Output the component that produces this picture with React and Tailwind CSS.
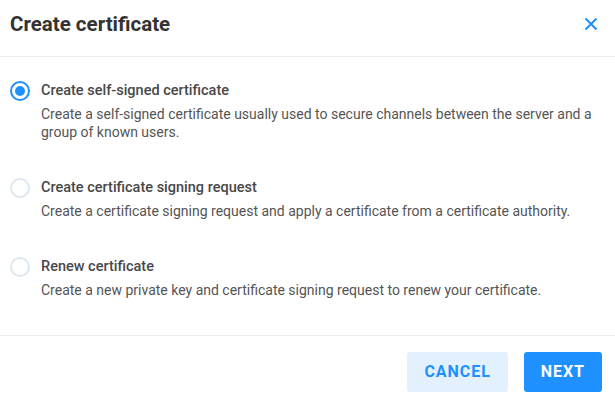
import React, { useState } from 'react';

const options = [
  {
    id: 'self',
    title: 'Create self-signed certificate',
    desc: 'Create a self-signed certificate usually used to secure channels between the server and a group of known users.',
  },
  {
    id: 'csr',
    title: 'Create certificate signing request',
    desc: 'Create a certificate signing request and apply a certificate from a certificate authority.',
  },
  {
    id: 'renew',
    title: 'Renew certificate',
    desc: 'Create a new private key and certificate signing request to renew your certificate.',
  },
];

export default function App() {
  const [selected, setSelected] = useState('self');

  return (
    <div className="w-[615px] h-[401px] bg-white overflow-hidden font-['Roboto',_'Liberation_Sans',_sans-serif]">
      {/* Header */}
      <div className="flex items-center justify-between h-[57px] pl-[10px] pr-[17px] pb-[8px] border-b border-[#e8eef4]">
        <h1 className="text-[20.5px] leading-[28px] font-bold text-[#333]">Create certificate</h1>
        <button className="text-[#1e90ff]">
          <svg width="14" height="14" viewBox="0 0 14 14" fill="none" stroke="currentColor" strokeWidth="2">
            <path d="M1.5 1.5l11 11M12.5 1.5l-11 11" />
          </svg>
        </button>
      </div>

      {/* Options */}
      <div className="pl-[10px] pr-[16px] pt-[24px] h-[279px] flex flex-col gap-[37px] border-b border-[#ececec]">
        {options.map(o => (
          <label key={o.id} className="flex gap-[11px] cursor-pointer" onClick={() => setSelected(o.id)}>
            <span
              className={
                selected === o.id
                  ? 'w-5 h-5 shrink-0 rounded-full border-2 border-[#1e90ff] flex items-center justify-center'
                  : 'w-5 h-5 shrink-0 rounded-full border-2 border-[#dde7f0]'
              }
            >
              {selected === o.id && <span className="w-[10px] h-[10px] rounded-full bg-[#1e90ff]" />}
            </span>
            <div>
              <p className="text-[14.5px] leading-[20px] font-medium text-[#484848]">{o.title}</p>
              <p className="mt-[4px] text-[14px] leading-[18px] text-[#555]">{o.desc}</p>
            </div>
          </label>
        ))}
      </div>

      {/* Footer */}
      <div className="flex justify-end gap-4 pt-4 pr-[13px]">
        <button className="h-10 px-[17px] rounded-[3px] bg-[#e3f0fd] text-[#1e90ff] text-[16px] font-bold tracking-[0.06em]">
          CANCEL
        </button>
        <button className="h-10 px-[17px] rounded-[3px] bg-[#1e90ff] text-white text-[16px] font-bold tracking-[0.06em]">
          NEXT
        </button>
      </div>
    </div>
  );
}
